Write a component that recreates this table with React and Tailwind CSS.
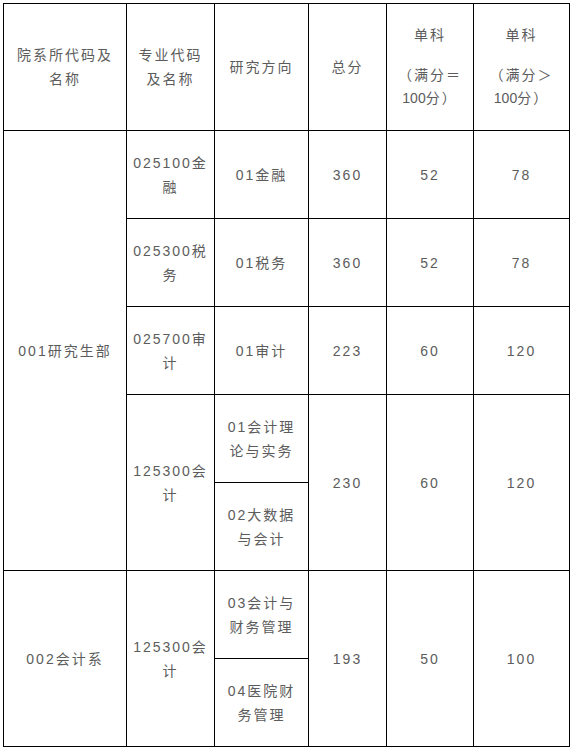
import React from "react";

const font = { fontFamily: '"Liberation Sans", "Noto Sans CJK SC", sans-serif' };

function C({ children, rowSpan, className = "" }) {
  return (
    <td
      rowSpan={rowSpan}
      className={"border border-black text-center align-middle p-0 text-[14px] leading-[24px] tracking-[2px] text-[#5c5c5c] " + className}
    >
      {children}
    </td>
  );
}

function Split({ top, bottom }) {
  return (
    <td className="border border-black p-0 align-top">
      <div className="flex flex-col h-[175px]">
        <div className="h-[88px] flex items-center justify-center text-center text-[14px] leading-[24px] tracking-[2px] text-[#5c5c5c] border-b border-black">
          <span>{top}</span>
        </div>
        <div className="flex-1 flex items-center justify-center text-center text-[14px] leading-[24px] tracking-[2px] text-[#5c5c5c]">
          <span>{bottom}</span>
        </div>
      </div>
    </td>
  );
}

export default function App() {
  return (
    <div className="w-[572px] h-[750px] bg-white pt-[3px] pl-[3px]" style={font}>
      <table className="table-fixed border-collapse w-[566px]">
        <colgroup>
          <col className="w-[123px]" />
          <col className="w-[88px]" />
          <col className="w-[94px]" />
          <col className="w-[78px]" />
          <col className="w-[87px]" />
          <col className="w-[96px]" />
        </colgroup>
        <tbody>
          <tr className="h-[127px]">
            <C>院系所代码及<br />名称</C>
            <C>专业代码<br />及名称</C>
            <C>研究方向</C>
            <C>总分</C>
            <C>
              <div className="leading-[23px]">单科</div>
              <div className="mt-[17px] leading-[23px]">（满分＝<br /><span className="tracking-normal">100</span>分）</div>
            </C>
            <C>
              <div className="leading-[23px]">单科</div>
              <div className="mt-[17px] leading-[23px]">（满分＞<br /><span className="tracking-normal">100</span>分）</div>
            </C>
          </tr>
          <tr className="h-[88px]">
            <C rowSpan={4}>001研究生部</C>
            <C>025100金<br />融</C>
            <C>01金融</C>
            <C>360</C>
            <C>52</C>
            <C>78</C>
          </tr>
          <tr className="h-[88px]">
            <C>025300税<br />务</C>
            <C>01税务</C>
            <C>360</C>
            <C>52</C>
            <C>78</C>
          </tr>
          <tr className="h-[88px]">
            <C>025700审<br />计</C>
            <C>01审计</C>
            <C>223</C>
            <C>60</C>
            <C>120</C>
          </tr>
          <tr>
            <C>125300会<br />计</C>
            <Split top={<>01会计理<br />论与实务</>} bottom={<>02大数据<br />与会计</>} />
            <C>230</C>
            <C>60</C>
            <C>120</C>
          </tr>
          <tr>
            <C>002会计系</C>
            <C>125300会<br />计</C>
            <Split top={<>03会计与<br />财务管理</>} bottom={<>04医院财<br />务管理</>} />
            <C>193</C>
            <C>50</C>
            <C>100</C>
          </tr>
        </tbody>
      </table>
    </div>
  );
}
